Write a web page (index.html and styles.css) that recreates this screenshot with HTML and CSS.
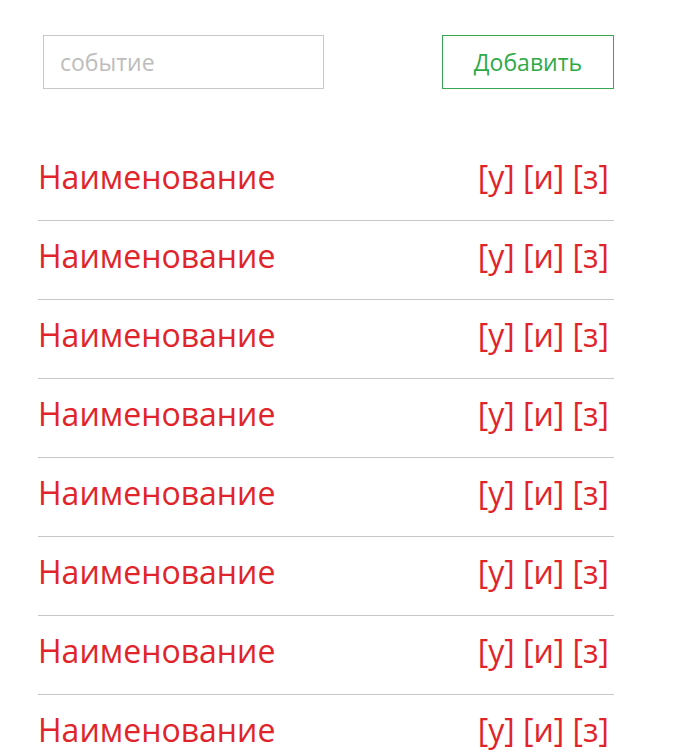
FILE: index.html
```html
<!DOCTYPE html>
<html lang="ru">
<head>
<meta charset="utf-8">
<title>События</title>
<link rel="stylesheet" href="styles.css">
</head>
<body>
<div class="page">
  <div class="header">
    <input class="event-input" type="text" placeholder="событие">
    <button class="add-btn" type="button">Добавить</button>
  </div>
  <ul class="list">
    <li class="row"><span class="name">Наименование</span><span class="actions">[у] [и] [з]</span></li>
    <li class="row"><span class="name">Наименование</span><span class="actions">[у] [и] [з]</span></li>
    <li class="row"><span class="name">Наименование</span><span class="actions">[у] [и] [з]</span></li>
    <li class="row"><span class="name">Наименование</span><span class="actions">[у] [и] [з]</span></li>
    <li class="row"><span class="name">Наименование</span><span class="actions">[у] [и] [з]</span></li>
    <li class="row"><span class="name">Наименование</span><span class="actions">[у] [и] [з]</span></li>
    <li class="row"><span class="name">Наименование</span><span class="actions">[у] [и] [з]</span></li>
    <li class="row"><span class="name">Наименование</span><span class="actions">[у] [и] [з]</span></li>
  </ul>
</div>
</body>
</html>
```
FILE: styles.css
```css
html, body {
  margin: 0;
  padding: 0;
  background: #ffffff;
}
body {
  font-family: "Open Sans", "Noto Sans", sans-serif;
  overflow: hidden;
}
.page {
  width: 576px;
  margin-left: 38px;
  padding-top: 35px;
}
.header {
  display: flex;
  justify-content: space-between;
  align-items: center;
  padding-left: 5px;
}
.event-input {
  box-sizing: border-box;
  width: 281px;
  height: 54px;
  border: 1px solid #c8c8c8;
  padding: 0 0 0 16px;
  font-family: "Open Sans", sans-serif;
  font-size: 23px;
  color: #555;
  outline: none;
}
.event-input::placeholder {
  color: #bdbdbd;
}
.add-btn {
  box-sizing: border-box;
  width: 172px;
  height: 54px;
  border: 1px solid #3aa655;
  background: #fff;
  color: #2eaa48;
  font-family: "Open Sans", sans-serif;
  font-size: 23px;
  padding: 0;
}
.list {
  list-style: none;
  margin: 53px 0 0 0;
  padding: 0;
}
.row {
  box-sizing: border-box;
  height: 79px;
  display: flex;
  justify-content: space-between;
  align-items: center;
  padding-bottom: 8px;
  border-bottom: 1px solid #c8c8c8;
  color: #e1242b;
  font-size: 32px;
  line-height: 1.2;
}
.actions {
  padding-right: 5px;
}
```
